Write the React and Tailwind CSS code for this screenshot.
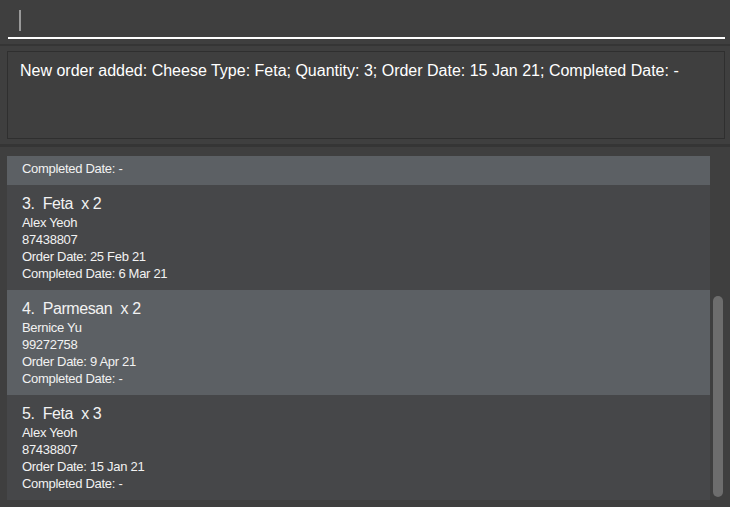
import React from 'react';

const orders = [
  { id: 2, cheese: 'Camembert', qty: 1, name: 'Charlotte Oliveiro', phone: '93210283', ordered: '2 Mar 21', completed: '-' },
  { id: 3, cheese: 'Feta', qty: 2, name: 'Alex Yeoh', phone: '87438807', ordered: '25 Feb 21', completed: '6 Mar 21' },
  { id: 4, cheese: 'Parmesan', qty: 2, name: 'Bernice Yu', phone: '99272758', ordered: '9 Apr 21', completed: '-' },
  { id: 5, cheese: 'Feta', qty: 3, name: 'Alex Yeoh', phone: '87438807', ordered: '15 Jan 21', completed: '-' },
];

const OrderCard = ({ order, index }) => {
  const shade = index % 2 === 0 ? 'bg-[#5c6064]' : 'bg-[#464749]';
  return (
    <div className={`${shade} h-[105px] shrink-0 px-[15px] pt-[8px] text-[#f2f2f2] ${index === 0 ? 'mt-[-76px]' : ''}`}>
      <div className="h-[21px] text-[16px] leading-[21px] tracking-[-0.4px] whitespace-pre">
        {order.id}.  {order.cheese}  x {order.qty}
      </div>
      <div className="text-[13px] leading-[17px] tracking-[-0.3px]">
        <div>{order.name}</div>
        <div>{order.phone}</div>
        <div>Order Date: {order.ordered}</div>
        <div>Completed Date: {order.completed}</div>
      </div>
    </div>
  );
};

export default function App() {
  return (
    <div className="w-[730px] h-[507px] bg-[#3f3f3f] flex flex-col overflow-hidden" style={{ fontFamily: '"Liberation Sans", Arial, sans-serif' }}>
      {/* command box */}
      <div className="h-[44px] shrink-0 px-[8px] pt-[10px]">
        <div className="h-[29px] border-b-2 border-white mr-[-3px] pl-[11px]">
          <div className="w-[2px] h-[21px] bg-[#9a9a9a]" />
        </div>
      </div>
      <div className="h-[2px] bg-[#353535] shrink-0" />

      {/* result display */}
      <div className="h-[98px] shrink-0 pt-[5px] pl-[7px] pr-[5px]">
        <div className="h-[88px] border border-[#2f2f2f] px-[12px] pt-[9px] text-white text-[16px] leading-[20px]">
          New order added: Cheese Type: Feta; Quantity: 3; Order Date: 15 Jan 21; Completed Date: -
        </div>
      </div>
      <div className="h-[3px] bg-[#353535] shrink-0" />

      {/* order list */}
      <div className="flex-1 pt-[9px] pb-[8px] pl-[7px] pr-[5px]">
        <div className="relative h-full overflow-hidden flex">
          <div className="flex-1 flex flex-col">
            {orders.map((o, i) => (
              <OrderCard key={o.id} order={o} index={i} />
            ))}
          </div>
          <div className="w-[15px] shrink-0 relative">
            <div className="absolute left-[3px] top-[140px] w-[10px] h-[201px] rounded-full bg-[#6d6d6d]" />
          </div>
        </div>
      </div>
    </div>
  );
}
